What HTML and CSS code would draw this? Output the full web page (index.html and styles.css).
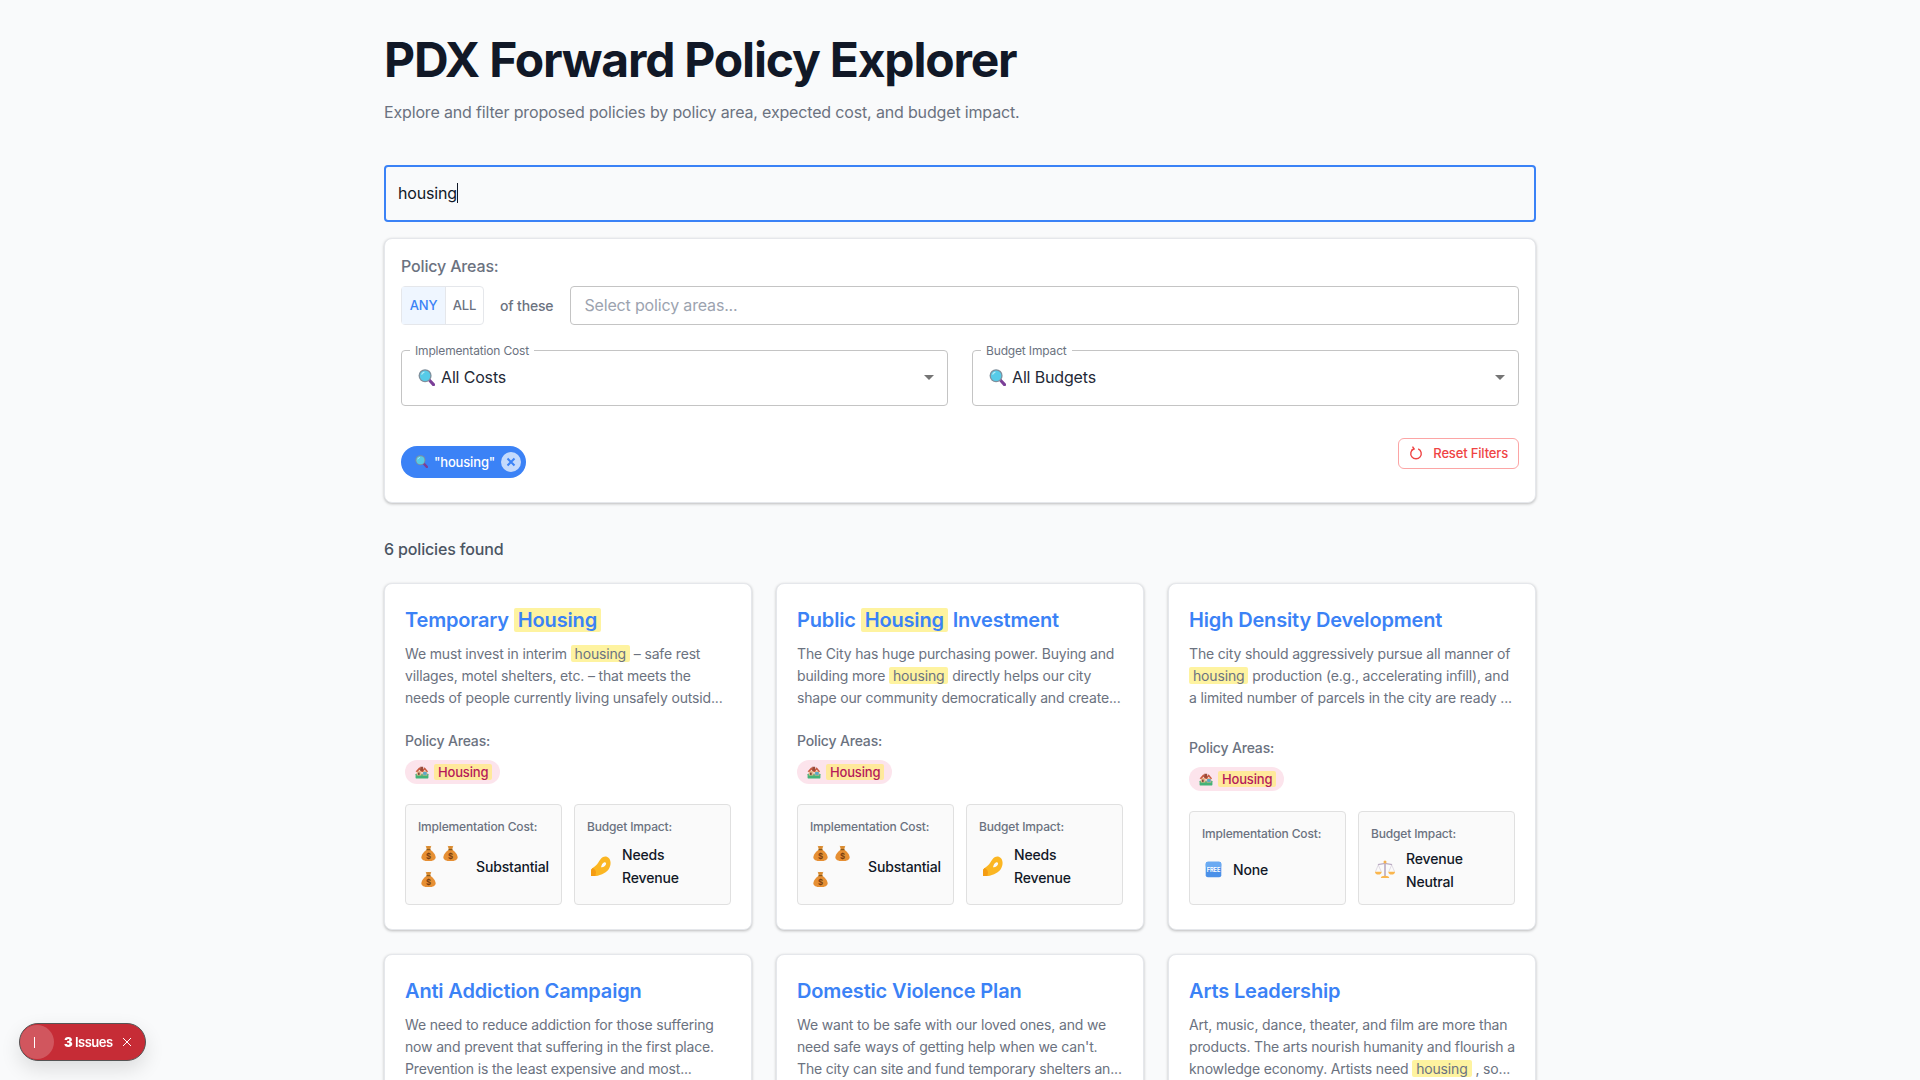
FILE: index.html
```html
<!DOCTYPE html>
<html lang="en">
<head>
    <meta charset="UTF-8">
    <meta name="viewport" content="width=device-width, initial-scale=1.0">
    <title>PDX Forward Policy Explorer</title>
    <link rel="stylesheet" href="styles.css">
</head>
<body>

<!-- emoji drawn once, used everywhere below -->
<svg class="sprites" aria-hidden="true">
    <symbol id="e-search" viewBox="0 0 24 24">
        <path d="M13.500 16l3-3 7 7.500a2.200 2.200 0 0 1-3.200 3.100z" fill="#7b3f98"/>
        <circle cx="10" cy="9.500" r="9.200" fill="#7f8f9c"/>
        <circle cx="10" cy="9.500" r="7.400" fill="#56cbe8"/>
        <path d="M5 8a5.500 5.500 0 0 1 4-3.600" stroke="#b5ecf8" stroke-width="1.600" fill="none"/>
    </symbol>
    <symbol id="e-house" viewBox="0 0 24 24">
        <rect x="1" y="15" width="22" height="8" rx="1" fill="#43b377"/>
        <rect x="3" y="10" width="8" height="8" fill="#e9b88e"/>
        <rect x="13" y="10" width="8" height="8" fill="#e9b88e"/>
        <rect x="14" y="12" width="6" height="5" fill="#58a9c9"/>
        <path d="M1 11l6.500-7 5 5 4-5 6 7-2 1-4-4-3 4h-2l-3.500-4-4.500 4z" fill="#c8593f"/>
        <rect x="9" y="3" width="5" height="7" fill="#9a4a38"/>
        <rect x="5" y="13" width="3" height="4" fill="#7a4a3a"/>
    </symbol>
    <symbol id="e-bag" viewBox="0 0 24 24">
        <path d="M8 1.500c1.500 1 2.500.2 4 .2s2.500.8 4-.2l-1.800 5.500H9.800z" fill="#d98a2e"/>
        <path d="M9.500 7h5c4 2.500 7.500 7 7.500 10.500 0 3.500-3.500 5.500-10 5.500S2 21 2 17.500C2 14 5.500 9.500 9.500 7z" fill="#e68f33"/>
        <rect x="9" y="6" width="6" height="1.800" rx=".9" fill="#8a5a1c"/>
        <text x="12" y="20" text-anchor="middle" class="bag-sign">$</text>
    </symbol>
    <symbol id="e-pinch" viewBox="0 0 24 24">
        <path d="M0 24v-6c0-1.500.8-2.500 2-3.500 2-1.700 5-3.500 7-7C11 4 13.500.5 17 .5c3.500 0 6.500 3 6.500 7.500 0 5.500-3 10-7.500 12.500-3.500 2-7.500 3.500-10 3.500z" fill="#fbb622"/>
        <path d="M12 13.500c.5-2.500 2-5.500 4-6 1.500-.4 2.500.8 2 2.500-.6 2-3 4-6 3.500z" fill="#fafafa"/>
        <path d="M0 24v-6c0-1.500.8-2.500 2-3.500 2 1 4 3 4 5 0 1.500-.5 3-1 4.500z" fill="#f59c12"/>
    </symbol>
    <symbol id="e-free" viewBox="0 0 24 24">
        <rect x="1" y="1" width="22" height="22" rx="3" fill="#4a90e8"/>
        <rect x="1" y="1" width="22" height="9" rx="3" fill="#6aaaf2"/>
        <text x="12" y="15.500" text-anchor="middle" class="free-label">FREE</text>
    </symbol>
    <symbol id="e-scales" viewBox="0 0 24 24">
        <rect x="11" y="3" width="2" height="17" fill="#bcaec4"/>
        <path d="M7 21.500c0-1.500 2-2.500 5-2.500s5 1 5 2.500z" fill="#fab64e"/>
        <path d="M3.500 5.500l8.500-1.500 8.500 1.500" stroke="#bcaec4" stroke-width="1.400" fill="none"/>
        <circle cx="12" cy="2.500" r="1.800" fill="#f4b04c"/>
        <path d="M4 6l-3.500 8M4 6l3.500 8M20 6l-3.500 8M20 6l3.500 8" stroke="#cfc4d4" stroke-width=".7" fill="none"/>
        <path d="M0 14h8c0 2-1.500 3.500-4 3.500S0 16 0 14zM16 14h8c0 2-1.500 3.500-4 3.500S16 16 16 14z" fill="#fab64e"/>
    </symbol>
</svg>

<div class="page">
    <h1 class="page-title">PDX Forward Policy Explorer</h1>
    <p class="page-sub">Explore and filter proposed policies by policy area, expected cost, and budget impact.</p>

    <div class="search-box"><span class="search-text">housing</span><span class="caret"></span></div>

    <section class="filters">
        <div class="filters-label">Policy Areas:</div>
        <div class="area-row">
            <div class="toggle">
                <span class="toggle-on">ANY</span>
                <span class="toggle-off">ALL</span>
            </div>
            <span class="of-these">of these</span>
            <div class="area-select">Select policy areas...</div>
        </div>

        <div class="select-row">
            <fieldset class="select-field">
                <legend>Implementation Cost</legend>
                <svg class="emoji-16"><use href="#e-search"/></svg>
                <span class="select-value">All Costs</span>
                <span class="select-arrow"></span>
            </fieldset>
            <fieldset class="select-field">
                <legend>Budget Impact</legend>
                <svg class="emoji-16"><use href="#e-search"/></svg>
                <span class="select-value">All Budgets</span>
                <span class="select-arrow"></span>
            </fieldset>
        </div>

        <div class="active-row">
            <div class="active-chip">
                <svg class="emoji-12"><use href="#e-search"/></svg>
                <span>"housing"</span>
                <span class="chip-close">
                    <svg viewBox="0 0 12 12"><path d="M2.500 2.500l7 7M9.500 2.500l-7 7"/></svg>
                </span>
            </div>
            <button class="reset-btn">
                <svg viewBox="0 0 16 16"><path d="M5.500 3.200a6 6 0 1 0 5 0"/><path d="M4 .8l1.900 2.600-2.900 1.300"/></svg>
                Reset Filters
            </button>
        </div>
    </section>

    <div class="result-count">6 policies found</div>

    <div class="card-grid">
        <article class="card">
            <h2 class="card-title">Temporary <mark>Housing</mark></h2>
            <p class="card-desc">We must invest in interim <mark>housing</mark> – safe rest villages, motel shelters, etc. – that meets the needs of people currently living unsafely outsid...</p>
            <div class="card-meta">
                <div class="meta-label">Policy Areas:</div>
                <span class="area-tag"><svg class="emoji-14"><use href="#e-house"/></svg><mark>Housing</mark></span>
                <div class="stat-row">
                    <div class="stat">
                        <div class="stat-label">Implementation Cost:</div>
                        <div class="stat-value">
                            <span class="bags"><svg><use href="#e-bag"/></svg><svg><use href="#e-bag"/></svg><svg><use href="#e-bag"/></svg></span>
                            <span>Substantial</span>
                        </div>
                    </div>
                    <div class="stat">
                        <div class="stat-label">Budget Impact:</div>
                        <div class="stat-value">
                            <span class="stat-icon"><svg><use href="#e-pinch"/></svg></span>
                            <span>Needs Revenue</span>
                        </div>
                    </div>
                </div>
            </div>
        </article>

        <article class="card">
            <h2 class="card-title">Public <mark>Housing</mark> Investment</h2>
            <p class="card-desc">The City has huge purchasing power. Buying and building more <mark>housing</mark> directly helps our city shape our community democratically and create...</p>
            <div class="card-meta">
                <div class="meta-label">Policy Areas:</div>
                <span class="area-tag"><svg class="emoji-14"><use href="#e-house"/></svg><mark>Housing</mark></span>
                <div class="stat-row">
                    <div class="stat">
                        <div class="stat-label">Implementation Cost:</div>
                        <div class="stat-value">
                            <span class="bags"><svg><use href="#e-bag"/></svg><svg><use href="#e-bag"/></svg><svg><use href="#e-bag"/></svg></span>
                            <span>Substantial</span>
                        </div>
                    </div>
                    <div class="stat">
                        <div class="stat-label">Budget Impact:</div>
                        <div class="stat-value">
                            <span class="stat-icon"><svg><use href="#e-pinch"/></svg></span>
                            <span>Needs Revenue</span>
                        </div>
                    </div>
                </div>
            </div>
        </article>

        <article class="card">
            <h2 class="card-title">High Density Development</h2>
            <p class="card-desc">The city should aggressively pursue all manner of <mark>housing</mark> production (e.g., accelerating infill), and a limited number of parcels in the city are ready ...</p>
            <div class="card-meta">
                <div class="meta-label">Policy Areas:</div>
                <span class="area-tag"><svg class="emoji-14"><use href="#e-house"/></svg><mark>Housing</mark></span>
                <div class="stat-row">
                    <div class="stat">
                        <div class="stat-label">Implementation Cost:</div>
                        <div class="stat-value">
                            <span class="stat-icon stat-icon-small"><svg><use href="#e-free"/></svg></span>
                            <span>None</span>
                        </div>
                    </div>
                    <div class="stat">
                        <div class="stat-label">Budget Impact:</div>
                        <div class="stat-value">
                            <span class="stat-icon"><svg><use href="#e-scales"/></svg></span>
                            <span>Revenue Neutral</span>
                        </div>
                    </div>
                </div>
            </div>
        </article>

        <article class="card card-cut">
            <h2 class="card-title">Anti Addiction Campaign</h2>
            <p class="card-desc">We need to reduce addiction for those suffering now and prevent that suffering in the first place. Prevention is the least expensive and most...</p>
        </article>

        <article class="card card-cut">
            <h2 class="card-title">Domestic Violence Plan</h2>
            <p class="card-desc">We want to be safe with our loved ones, and we need safe ways of getting help when we can't. The city can site and fund temporary shelters an...</p>
        </article>

        <article class="card card-cut">
            <h2 class="card-title">Arts Leadership</h2>
            <p class="card-desc">Art, music, dance, theater, and film are more than products. The arts nourish humanity and flourish a knowledge economy. Artists need <mark>housing</mark> , so...</p>
        </article>
    </div>
</div>

<div class="issues-badge">
    <span class="issues-logo"><span class="issues-bar"></span></span>
    <span class="issues-text"><b>3</b> Issues</span>
    <svg class="issues-close" viewBox="0 0 10 10"><path d="M1 1l8 8M9 1l-8 8"/></svg>
</div>

</body>
</html>
```

FILE: styles.css
```css
html, body {
    height: 100%;
    overflow: hidden;
}
body {
    margin: 0;
    background-color: #f9fafb;
    color: #111827;
    font-family: Inter, "Noto Sans", sans-serif;
    letter-spacing: -0.01em;
}
.sprites {
    display: none;
}
mark {
    background-color: #fef3a0;
    color: inherit;
    padding: 0 4px;
    border-radius: 2px;
}
.page {
    width: 1152px;
    margin: 0 auto;
    padding-top: 31px;
}
.page-title {
    margin: 0;
    font-size: 48px;
    line-height: 57.6px;
    font-weight: 700;
    letter-spacing: -1.2px;
    color: #111827;
}
.page-sub {
    margin: 11px 0 41px;
    font-size: 16px;
    line-height: 24px;
    color: #6b7280;
}
.search-box {
    display: flex;
    align-items: center;
    height: 57px;
    box-sizing: border-box;
    padding: 0 12px;
    border: 2px solid #3b82f6;
    border-radius: 4px;
    font-size: 16px;
}
.caret {
    width: 1px;
    height: 20px;
    background-color: #111827;
}
.filters {
    margin-top: 16px;
    padding: 15px 16px 16px;
    background-color: #fff;
    border: 1px solid #e5e7eb;
    border-radius: 8px;
    box-shadow: 0 1px 3px rgba(0, 0, 0, 0.25);
}
.filters-label {
    font-size: 16px;
    line-height: 24px;
    font-weight: 500;
    color: #6b7280;
    margin-bottom: 8px;
}
.area-row {
    display: flex;
    align-items: center;
    height: 39px;
}
.toggle {
    display: flex;
    height: 39px;
    box-sizing: border-box;
    border: 1px solid #e5e7eb;
    border-radius: 4px;
    font-size: 13px;
    font-weight: 500;
    line-height: 37px;
    text-align: center;
}
.toggle-on {
    width: 43px;
    background-color: #eff6ff;
    color: #3b82f6;
    border-right: 1px solid #e5e7eb;
}
.toggle-off {
    width: 37px;
    color: #6b7280;
}
.of-these {
    margin: 0 17px 0 16px;
    font-size: 14px;
    font-weight: 500;
    color: #6b7280;
}
.area-select {
    flex: 1;
    height: 39px;
    box-sizing: border-box;
    padding: 0 13px;
    border: 1px solid #c4c4c4;
    border-radius: 4px;
    font-size: 16px;
    line-height: 37px;
    color: #9ca3af;
}
.select-row {
    display: grid;
    grid-template-columns: 1fr 1fr;
    gap: 24px;
    margin-top: 19px;
}
.select-field {
    display: flex;
    align-items: center;
    position: relative;
    min-width: 0;
    height: 62px;
    box-sizing: border-box;
    margin: 0;
    padding: 0 13px 8px 16px;
    border: 1px solid #c4c4c4;
    border-radius: 4px;
}
.select-field legend {
    margin-left: -8px;
    padding: 0 5px;
    font-size: 12px;
    line-height: 14px;
    color: #6b7280;
}
.select-value {
    margin-left: 6px;
    font-size: 16px;
    color: #1f2937;
}
.select-arrow {
    margin-left: auto;
    border-left: 5px solid transparent;
    border-right: 5px solid transparent;
    border-top: 5px solid #757575;
}
.emoji-16 {
    width: 17px;
    height: 17px;
}
.emoji-14 {
    width: 14px;
    height: 14px;
}
.emoji-12 {
    width: 13px;
    height: 13px;
}
.active-row {
    display: flex;
    justify-content: space-between;
    align-items: flex-start;
    margin-top: 32px;
    padding-bottom: 8px;
}
.active-chip {
    display: flex;
    align-items: center;
    height: 32px;
    box-sizing: border-box;
    margin-top: 8px;
    padding: 0 5px 0 14px;
    gap: 6px;
    background-color: #3b82f6;
    border-radius: 16px;
    font-size: 13px;
    font-weight: 500;
    color: #fff;
}
.chip-close {
    display: flex;
    align-items: center;
    justify-content: center;
    width: 20px;
    height: 20px;
    background-color: rgba(255, 255, 255, 0.7);
    border-radius: 50%;
}
.chip-close svg {
    width: 12px;
    height: 12px;
    fill: none;
    stroke: #3b82f6;
    stroke-width: 2;
}
.reset-btn {
    display: flex;
    align-items: center;
    gap: 10px;
    height: 31px;
    box-sizing: border-box;
    padding: 0 10px;
    background: none;
    border: 1px solid #fca5a5;
    border-radius: 6px;
    font-family: inherit;
    font-size: 13px;
    font-weight: 500;
    letter-spacing: inherit;
    color: #ef4444;
}
.reset-btn svg {
    width: 14px;
    height: 14px;
    fill: none;
    stroke: #ef4444;
    stroke-width: 1.6;
}
.result-count {
    margin: 34px 0 22px;
    font-size: 16px;
    line-height: 24px;
    font-weight: 500;
    color: #4b5563;
}
.card-grid {
    display: grid;
    grid-template-columns: repeat(3, 1fr);
    gap: 24px;
}
.card {
    display: flex;
    flex-direction: column;
    min-width: 0;
    padding: 24px 20px;
    background-color: #fff;
    border: 1px solid #e5e7eb;
    border-radius: 8px;
    box-shadow: 0 1px 3px rgba(0, 0, 0, 0.25);
}
.card-cut {
    padding-bottom: 80px;
}
.card-title {
    margin: 0;
    font-size: 20px;
    line-height: 24px;
    font-weight: 600;
    color: #3b82f6;
}
.card-desc {
    margin: 11px 0 0;
    font-size: 14px;
    line-height: 22px;
    color: #6b7280;
}
.card-meta {
    margin-top: auto;
    padding-top: 21px;
}
.meta-label {
    font-size: 14px;
    line-height: 22px;
    font-weight: 500;
    color: #6b7280;
}
.area-tag {
    display: inline-flex;
    align-items: center;
    gap: 5px;
    height: 24px;
    margin-top: 8px;
    padding: 0 8px 0 10px;
    background-color: #fce4ec;
    border-radius: 12px;
    font-size: 13px;
    font-weight: 500;
    color: #b5195a;
}
.area-tag mark {
    background-color: #ffe99b;
}
.stat-row {
    display: grid;
    grid-template-columns: 1fr 1fr;
    gap: 12px;
    margin-top: 20px;
}
.stat {
    display: flex;
    flex-direction: column;
    min-width: 0;
    box-sizing: border-box;
    padding: 12px 12px 11px;
    background-color: #fafafa;
    border: 1px solid #e0e0e0;
    border-radius: 4px;
}
.stat-label {
    font-size: 12px;
    line-height: 20px;
    font-weight: 500;
    color: #6b7280;
    margin-bottom: 3px;
}
.stat-value {
    flex: 1;
    display: flex;
    align-items: center;
    font-size: 14px;
    line-height: 23px;
    font-weight: 500;
    color: #111827;
}
.bags {
    display: flex;
    flex-wrap: wrap;
    flex: none;
    width: 50px;
    margin-right: 8px;
    box-sizing: border-box;
    padding-left: 2px;
}
.bags svg {
    width: 17px;
    height: 26.5px;
    margin-right: 5px;
}
.stat-icon {
    display: flex;
    flex: none;
    padding-left: 4px;
    margin-right: 11px;
}
.stat-icon svg {
    width: 20px;
    height: 20px;
}
.stat-icon-small {
    padding-left: 3px;
}
.stat-icon-small svg {
    width: 17px;
    height: 17px;
}
.bag-sign {
    font-family: Inter, sans-serif;
    font-size: 11px;
    font-weight: 700;
    fill: #7a3f10;
}
.free-label {
    font-family: Inter, sans-serif;
    font-size: 8px;
    font-weight: 700;
    fill: #fff;
}
.issues-badge {
    position: fixed;
    left: 19px;
    top: 1023px;
    display: flex;
    align-items: center;
    width: 127px;
    height: 38px;
    box-sizing: border-box;
    background-color: #c62c36;
    border: 1px solid #555;
    border-radius: 19px;
    box-shadow: 0 8px 20px rgba(0, 0, 0, 0.12);
    font-size: 13px;
    color: #fff;
}
.issues-logo {
    display: flex;
    align-items: center;
    justify-content: center;
    width: 34px;
    height: 34px;
    background-color: rgba(255, 255, 255, 0.2);
    border-radius: 50%;
}
.issues-bar {
    width: 1px;
    height: 11px;
    background-color: #fff;
    margin-right: 5px;
}
.issues-text {
    margin-left: 10px;
    font-weight: 600;
    letter-spacing: -0.5px;
}
.issues-close {
    width: 10px;
    height: 10px;
    margin-left: 9px;
    fill: none;
    stroke: #fff;
    stroke-width: 1;
}
```
